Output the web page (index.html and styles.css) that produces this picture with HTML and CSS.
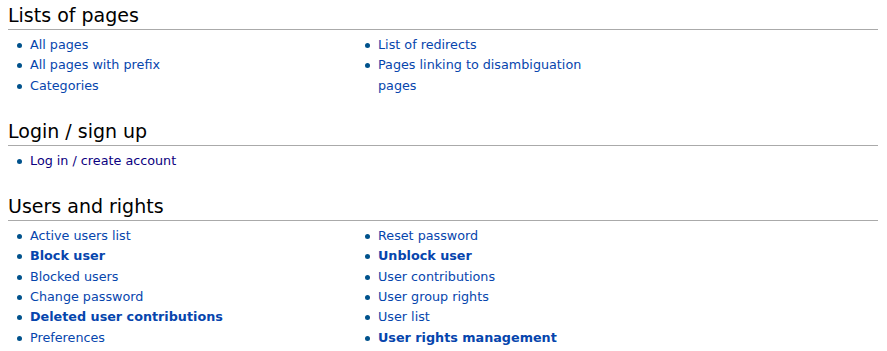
FILE: index.html
```html
<!DOCTYPE html>
<html lang="en">
<head>
    <meta charset="UTF-8">
    <title>Special pages</title>
    <link rel="stylesheet" href="styles.css">
</head>
<body>
    <div class="content">
        <h2>Lists of pages</h2>
        <div class="special-list">
            <ul>
                <li><a href="#">All pages</a></li>
                <li><a href="#">All pages with prefix</a></li>
                <li><a href="#">Categories</a></li>
            </ul>
            <ul>
                <li><a href="#">List of redirects</a></li>
                <li><a href="#">Pages linking to disambiguation pages</a></li>
            </ul>
        </div>

        <h2>Login / sign up</h2>
        <div class="special-list">
            <ul class="wide">
                <li><a href="#" class="visited">Log in / create account</a></li>
            </ul>
        </div>

        <h2>Users and rights</h2>
        <div class="special-list">
            <ul>
                <li><a href="#">Active users list</a></li>
                <li><a href="#" class="restricted">Block user</a></li>
                <li><a href="#">Blocked users</a></li>
                <li><a href="#">Change password</a></li>
                <li><a href="#" class="restricted">Deleted user contributions</a></li>
                <li><a href="#">Preferences</a></li>
            </ul>
            <ul>
                <li><a href="#">Reset password</a></li>
                <li><a href="#" class="restricted">Unblock user</a></li>
                <li><a href="#">User contributions</a></li>
                <li><a href="#">User group rights</a></li>
                <li><a href="#">User list</a></li>
                <li><a href="#" class="restricted">User rights management</a></li>
            </ul>
        </div>
    </div>
</body>
</html>
```

FILE: styles.css
```css
body {
    margin: 0;
    padding: 0;
    background: #fff;
    color: #000;
    font-family: "DejaVu Sans", sans-serif;
}
.content {
    padding: 0 9px 0 8px;
}
h2 {
    font-size: 19px;
    font-weight: normal;
    line-height: 23px;
    margin: 4px 0 0;
    padding: 0 0 2px;
    border-bottom: 1px solid #aaa;
}
.special-list {
    display: flex;
    margin: 5px 0 23.6px;
}
.special-list:last-child {
    margin-bottom: 0;
}
ul {
    list-style: none;
    margin: 0;
    padding: 0 0 0 22px;
    width: 326px;
    font-size: 12.75px;
    line-height: 20.4px;
}
ul + ul {
    width: 222px;
}
ul.wide {
    width: auto;
}
li {
    position: relative;
}
li::before {
    content: "";
    position: absolute;
    left: -13px;
    top: 8px;
    width: 5px;
    height: 5px;
    border-radius: 50%;
    background: #00528c;
}
a {
    color: #0645ad;
    text-decoration: none;
}
a.visited {
    color: #0b0080;
}
a.restricted {
    font-weight: bold;
}
```
